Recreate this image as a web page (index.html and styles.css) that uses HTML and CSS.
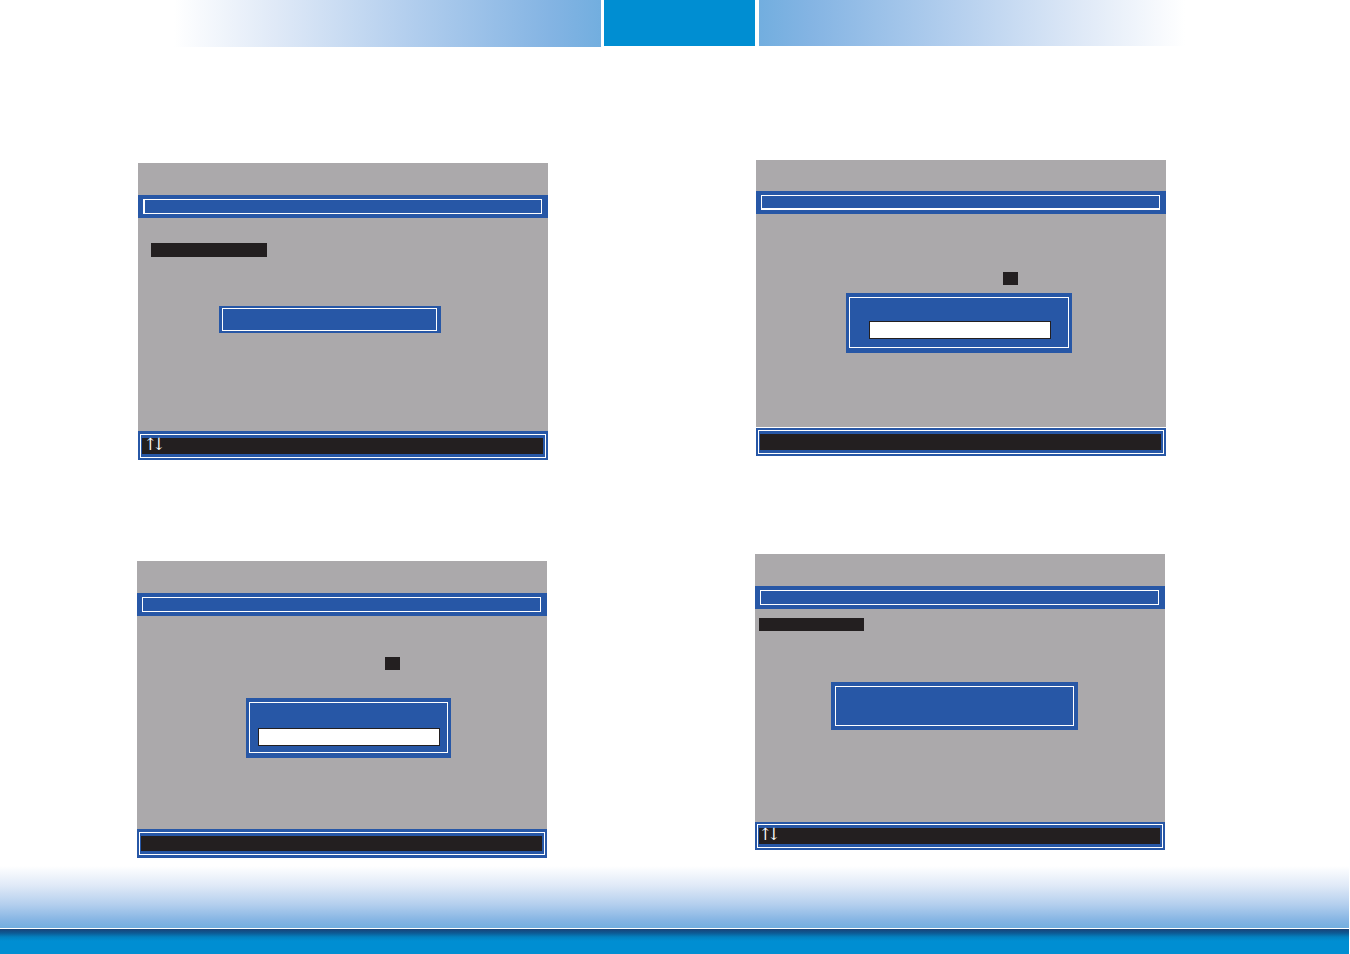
FILE: index.html
```html
<!DOCTYPE html>
<html lang="en">
<head>
<meta charset="utf-8">
<title>BIOS Setup</title>
<link rel="stylesheet" href="styles.css">
</head>
<body>
<div class="page">
  <header class="banner">
    <div class="fade fade-left"></div>
    <div class="tab"></div>
    <div class="fade fade-right"></div>
  </header>
  <main>
    <div class="row row-first">
      <section class="screen screen-lowered">
        <div class="title"><div class="frame frame-heavy"></div></div>
        <div class="body">
          <div class="mark mark-menu"></div>
          <div class="dialog dialog-confirm"><div class="frame"></div></div>
        </div>
        <div class="keys"><div class="keys-frame"><div class="strip">↑↓</div></div></div>
      </section>
      <section class="screen screen-compact">
        <div class="title"><div class="frame frame-base"></div></div>
        <div class="body body-gap">
          <div class="mark mark-cell"></div>
          <div class="dialog dialog-wide"><div class="frame"><input class="field" type="text" aria-label="Value"></div></div>
        </div>
        <div class="keys keys-slim"><div class="keys-frame"><div class="strip"></div></div></div>
      </section>
    </div>
    <div class="row row-second">
      <section class="screen screen-lowered">
        <div class="title"><div class="frame"></div></div>
        <div class="body">
          <div class="mark mark-cell mark-high"></div>
          <div class="dialog dialog-entry"><div class="frame"><input class="field" type="text" aria-label="Value"></div></div>
        </div>
        <div class="keys keys-even"><div class="keys-frame"><div class="strip"></div></div></div>
      </section>
      <section class="screen">
        <div class="title"><div class="frame"></div></div>
        <div class="body">
          <div class="mark mark-item"></div>
          <div class="dialog dialog-message"><div class="frame"></div></div>
        </div>
        <div class="keys keys-slim"><div class="keys-frame"><div class="strip">↑↓</div></div></div>
      </section>
    </div>
  </main>
  <footer class="foot">
    <div class="foot-fade"></div>
    <div class="foot-bar"></div>
  </footer>
</div>
</body>
</html>
```
FILE: styles.css
```css
* { box-sizing: border-box; }

body {
  margin: 0;
  background: #fff;
  font-family: "Liberation Serif", "Times New Roman", serif;
}

.page {
  display: flex;
  flex-direction: column;
  min-height: 100vh;
  padding-right: 1px;
}

.banner {
  display: grid;
  grid-template-columns: 1fr 151px 1fr;
  column-gap: 3px;
  align-items: start;
  padding: 0 164px 0 174px;
}

.fade { height: 46px; }
.fade-left {
  height: 47px;
  background: linear-gradient(to left, #72aedf 0%, #84b4e3 12%, #b4cfee 46%, #dfe9f7 76%, #fff 100%);
}
.fade-right {
  margin-left: 1px;
  background: linear-gradient(to right, #72aedf 0%, #84b4e3 12%, #b4cfee 46%, #dfe9f7 76%, #fff 100%);
}
.tab { height: 46px; background: #008ed2; }

.row {
  display: grid;
  grid-template-columns: 1fr 1fr;
  column-gap: 208px;
  align-items: start;
}
.row-first { padding: 113px 183px 0 138px; }
.row-second { padding: 94px 184px 0 137px; }

.screen { padding-top: 32px; background: #aba9ab; }
.screen-compact { padding-top: 31px; }
.row-first .screen-lowered { margin-top: 3px; }
.row-second .screen-lowered { margin-top: 7px; }

.title { height: 23px; padding: 4px 6px 4px 5px; background: #2757a6; }
.frame { height: 100%; border: 1px solid #fff; }
.frame-heavy { border-left-width: 2px; }
.frame-base { border-bottom-width: 2px; }

.body { position: relative; height: 213px; display: flow-root; }
.body-gap { border-bottom: 1px solid #fff; height: 214px; }

.mark { background: #231f20; }
.mark-menu { width: 116px; height: 14px; margin: 25px 0 0 13px; }
.mark-item { width: 105px; height: 13px; margin: 9px 0 0 4px; }
.mark-cell { width: 15px; height: 13px; margin: 58px 0 0 247px; }
.mark-high { margin: 41px 0 0 248px; }

.dialog { position: absolute; padding: 4px 3px 5px; background: #2757a6; }
.dialog-confirm { left: 81px; top: 88px; width: 222px; height: 27px; padding: 2px 4px 2px 3px; }
.dialog-wide { left: 90px; top: 79px; width: 226px; height: 60px; }
.dialog-wide .frame { padding: 23px 17px 0 19px; }
.dialog-entry { left: 109px; top: 82px; width: 205px; height: 60px; }
.dialog-entry .frame { padding: 25px 7px 0 8px; }
.dialog-message { left: 76px; top: 73px; width: 247px; height: 48px; padding: 4px; }

.field {
  display: block;
  width: 100%;
  height: 18px;
  margin: 0;
  padding: 0 4px;
  border: 1px solid #231f20;
  border-radius: 0;
  background: #fff;
  font: 12px "Liberation Serif", serif;
}

.keys { height: 29px; padding: 3px 2px 2px; background: #2757a6; }
.keys-even { padding-bottom: 3px; }
.keys-slim { height: 28px; padding: 2px; }
.keys-frame { height: 100%; padding: 3px 2px 3px 1px; border: 1px solid #fff; }
.strip {
  height: 100%;
  padding-left: 4px;
  background: #231f20;
  color: #fff;
  font-family: "DejaVu Math TeX Gyre", "Liberation Serif", serif;
  font-size: 15px;
  line-height: 12px;
}
.keys-slim .strip { padding-left: 2px; }

.foot { margin-top: auto; }
.foot-fade {
  height: 62px;
  background: linear-gradient(#fff 0%, #dfe9f7 32%, #b4cfee 62%, #84b4e3 88%, #72aedf 100%);
}
.foot-bar {
  height: 26px;
  border-top: 1px solid #fff;
  background: linear-gradient(#194377 0, #0d5a94 4px, #0380bf 8px, #008ed2 12px);
}
```
